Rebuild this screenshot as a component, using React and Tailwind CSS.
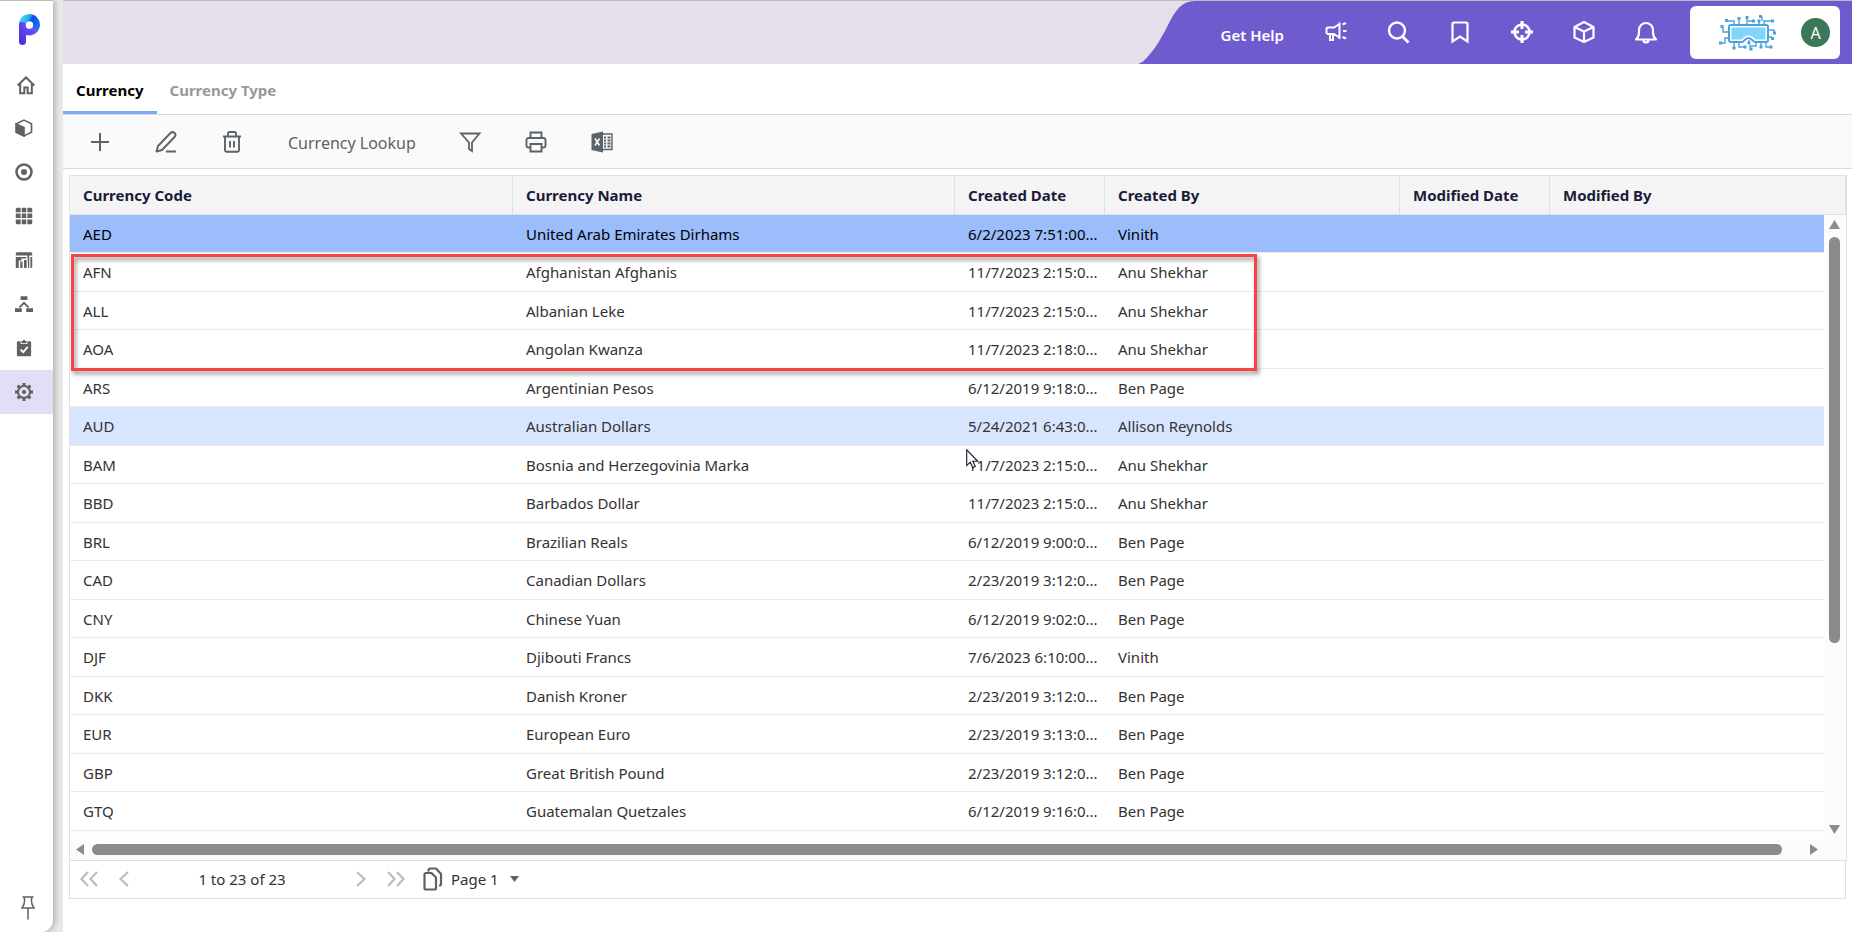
import React from "react";

const ROWS = [
  ["AED", "United Arab Emirates Dirhams", "6/2/2023 7:51:00...", "Vinith"],
  ["AFN", "Afghanistan Afghanis", "11/7/2023 2:15:0...", "Anu Shekhar"],
  ["ALL", "Albanian Leke", "11/7/2023 2:15:0...", "Anu Shekhar"],
  ["AOA", "Angolan Kwanza", "11/7/2023 2:18:0...", "Anu Shekhar"],
  ["ARS", "Argentinian Pesos", "6/12/2019 9:18:0...", "Ben Page"],
  ["AUD", "Australian Dollars", "5/24/2021 6:43:0...", "Allison Reynolds"],
  ["BAM", "Bosnia and Herzegovinia Marka", "11/7/2023 2:15:0...", "Anu Shekhar"],
  ["BBD", "Barbados Dollar", "11/7/2023 2:15:0...", "Anu Shekhar"],
  ["BRL", "Brazilian Reals", "6/12/2019 9:00:0...", "Ben Page"],
  ["CAD", "Canadian Dollars", "2/23/2019 3:12:0...", "Ben Page"],
  ["CNY", "Chinese Yuan", "6/12/2019 9:02:0...", "Ben Page"],
  ["DJF", "Djibouti Francs", "7/6/2023 6:10:00...", "Vinith"],
  ["DKK", "Danish Kroner", "2/23/2019 3:12:0...", "Ben Page"],
  ["EUR", "European Euro", "2/23/2019 3:13:0...", "Ben Page"],
  ["GBP", "Great British Pound", "2/23/2019 3:12:0...", "Ben Page"],
  ["GTQ", "Guatemalan Quetzales", "6/12/2019 9:16:0...", "Ben Page"],
];

const COLUMNS = [
  ["Currency Code", "w-[443px]"],
  ["Currency Name", "w-[442px]"],
  ["Created Date", "w-[150px]"],
  ["Created By", "w-[295px]"],
  ["Modified Date", "w-[150px]"],
  ["Modified By", ""],
];

function Icon({ size = 24, w = 2, children, ...rest }) {
  return (
    <svg
      width={size}
      height={size}
      viewBox="0 0 24 24"
      fill="none"
      stroke="currentColor"
      strokeWidth={w}
      aria-hidden="true"
      className="shrink-0"
      {...rest}
    >
      {children}
    </svg>
  );
}

/* ---------- Sidebar ---------- */

function Logo() {
  return (
    <svg width="21" height="31" viewBox="0 0 21 31" aria-hidden="true">
      <defs>
        <linearGradient id="ring" x1="0" y1="0" x2="1" y2="0.5">
          <stop offset="0" stopColor="#5fe3fb" />
          <stop offset="0.45" stopColor="#1fb4f5" />
          <stop offset="0.6" stopColor="#0a4fe0" />
          <stop offset="1" stopColor="#1273ff" />
        </linearGradient>
        <linearGradient id="stem" x1="0" y1="1" x2="1" y2="0">
          <stop offset="0" stopColor="#4a2bd0" />
          <stop offset="1" stopColor="#7a5cff" />
        </linearGradient>
      </defs>
      <path d="M10.500 0A10.500 10.800 0 0 1 21 10.800C21 13 20 16 17.500 18.500L11 15 4 11 0 9.500C0.500 4 5 0 10.500 0Z" fill="url(#ring)" />
      <path d="M0 9.500C0 7.500 6.500 7 6.500 10.500C7 14 9 15 11 15C12.500 15 14 14 14.500 12.500L18.500 17.500C15.500 21 11 22.200 7 21V27.500A3.500 3.500 0 0 1 0 27.500Z" fill="url(#stem)" />
      <circle cx="10.500" cy="11" r="3.700" fill="#fff" />
    </svg>
  );
}

const NAV = [
  ["Home", <Icon size={20} key="i" w={2.4}><path d="M2 12.500 12 3l10 9.500M5 10.500V22h5v-7h4v7h5V10.500" /></Icon>],
  ["Products", <Icon size={18} key="i" w={2.2}><path d="M12 1.500 22 6.500v11L12 22.500 2 17.500v-11z" /><path d="M1.500 6.500 12 11.500v11L1.500 17.500z" fill="currentColor" /></Icon>],
  ["Targets", <Icon size={18} key="i" w={3.4}><circle cx="12" cy="12" r="10" /><circle cx="12" cy="12" r="4" fill="currentColor" stroke="none" /></Icon>],
  ["Modules", <Icon size={18} key="i" stroke="none" fill="currentColor">
    <path d="M3 1h4.500v6H1V3a2 2 0 0 1 2-2zM9 1h6v6H9zM16.500 1H21a2 2 0 0 1 2 2v4h-6.500zM1 8.500h6.500v6H1zM9 8.500h6v6H9zM16.500 8.500H23v6h-6.500zM1 16.500h6.500V23H3a2 2 0 0 1-2-2zM9 16.500h6V23H9zM16.500 16.500H23V21a2 2 0 0 1-2 2h-4.500z" />
  </Icon>],
  ["Reports", <Icon size={18} key="i" stroke="none" fill="currentColor">
    <path d="M3 1.500h18a2 2 0 0 1 2 2V6H1V3.500a2 2 0 0 1 2-2zM1 8h14v2H8.500v2.500H5V22.500H1zM7 14h3v8.500H7zM12 12h3.500v10.500H12zM16.500 6H19v16.500h-1.500zM20.500 8H23v12.500a2 2 0 0 1-2 2h-.5z" />
  </Icon>],
  ["Hierarchy", <Icon size={18} key="i" w={2.4}>
    <path d="M6 16.500 12 10.500l6 6" />
    <path d="M7.500 1.500h9v5h-9zM0 17.500h9v5H0zM15 17.500h9v5h-9z" fill="currentColor" stroke="none" />
  </Icon>],
  ["Tasks", <Icon size={18} key="i" stroke="none" fill="currentColor">
    <path d="M4 3h3.500v3.500h9V3H20a1.500 1.500 0 0 1 1.500 1.500v17A1.500 1.500 0 0 1 20 23H4a1.500 1.500 0 0 1-1.500-1.500v-17A1.500 1.500 0 0 1 4 3z" />
    <path d="M8.500 2.500h2a1.500 1.500 0 0 1 3 0h2v3h-7z" />
    <path d="m7.500 14 3.500 3.500 6-7" fill="none" stroke="#fff" strokeWidth="2.400" />
  </Icon>],
  ["Settings", <Icon size={18} key="i" w={2.6}>
    <circle cx="12" cy="12" r="8" />
    <circle cx="12" cy="12" r="2.800" fill="currentColor" stroke="none" />
    <path d="M12 0v4M12 20v4M0 12h4M20 12h4M3.500 3.500l3 3M17.500 17.500l3 3M3.500 20.500l3-3M17.500 6.500l3-3" strokeWidth="3.800" />
  </Icon>],
];

function Sidebar() {
  return (
    <aside className="z-10 flex w-[53px] shrink-0 flex-col rounded-br-xl border-t border-[#bdbdbd] bg-white shadow-[2px_0_6px_rgba(0,0,0,0.25)]">
      <a href="#home" aria-label="Dashboard" className="flex h-[61px] items-start pt-[13px] pl-[19px]">
        <Logo />
      </a>
      <nav className="flex flex-1 flex-col text-[#616161]">
        {NAV.map(([label, icon]) => (
          <a
            key={label}
            href={"#" + label.toLowerCase()}
            aria-label={label}
            className={
              "flex h-11 items-center " +
              (label === "Home" ? "pt-0.5 pl-4 " : "pl-[15px] ") +
              (label === "Settings" ? "bg-[#e0dff5]" : "")
            }
          >
            {icon}
          </a>
        ))}
      </nav>
      <button type="button" aria-label="Pin menu" className="mb-3 flex justify-center pl-0.5 text-[#616161]">
        <svg width="14" height="24" viewBox="0 0 14 24" fill="none" stroke="currentColor" strokeWidth="1.500" aria-hidden="true">
          <path d="M1.500 1h11M3 1c1.200 4 1 7-2 11h12c-3-4-3.200-7-2-11M7 12v11.500" />
        </svg>
      </button>
    </aside>
  );
}

/* ---------- Header ---------- */

const ACTIONS = [
  ["Announcements", <Icon size={24} key="i" w={2}>
    <path d="M15.500 2.500v16.500M15.500 4 10 7.500H4A1.500 1.500 0 0 0 2.500 9v3.500A1.500 1.500 0 0 0 4 14h6l5.500 3.500M6 14v6h3v-6" />
    <path d="M18.500 4.500l3.500-1.500M19 11h3.500M18.500 17l3.500 1.500" />
  </Icon>],
  ["Search", <Icon size={24} key="i" w={2.4}><circle cx="11" cy="10.500" r="8" /><path d="m16.500 16.500 6 6" strokeWidth="2.800" /></Icon>],
  ["Bookmarks", <Icon size={24} key="i" w={2.2}><path d="M4.500 21.500V4A1.500 1.500 0 0 1 6 2.500h12A1.500 1.500 0 0 1 19.500 4v17.500L12 16.500z" /></Icon>],
  ["Locate", <Icon size={24} key="i" w={2.6}>
    <circle cx="12" cy="12" r="7.500" />
    <path d="M12 1v8M12 15v8M1 12h8M15 12h8" strokeWidth="3" />
  </Icon>],
  ["Packages", <Icon size={24} key="i" w={2.2} strokeLinejoin="round"><path d="M12 2 21.500 7v10.500L12 22 2.500 17.500V7zM2.500 7 12 11.500 21.500 7M12 11.500V22" /></Icon>],
  ["Notifications", <Icon size={24} key="i" w={2.2} strokeLinejoin="round">
    <path d="M2 19.500h20c-2-2-3-3.500-3-7V10a7 7 0 0 0-14 0v2.500c0 3.500-1 5-3 7zM9.500 20a2.500 2.500 0 0 0 5 0" />
  </Icon>],
];

function VrLogo() {
  return (
    <svg width="58" height="36" viewBox="0 0 58 36" fill="none" stroke="#4aa3df" strokeWidth="1.400" aria-hidden="true">
      <path d="M13 10h35a2 2 0 0 1 2 2v13a2 2 0 0 1-2 2H37c-2 0-3-4-6.500-4S26 27 24 27H13a2 2 0 0 1-2-2V12a2 2 0 0 1 2-2z" fill="#fff" strokeWidth="2" />
      <path d="M13.500 12.500h34v12H38c-1.500 0-3-4-7.500-4s-6 4-7.500 4h-9.500z" fill="#82d4fa" stroke="none" />
      <path d="M16 10V6H9M21 10V4M29 10V2M34 6h-4M41 10V6M46 10V6h8M44 6V2h-3M11 17H5v-5M11 23H7v5H3M50 15h6v3M50 22h4M16 27v6M21 27v5h5M31 25v4M38 27v4h-6v3M43 27v4M48 27v5h4" />
      <path d="M7 4h3v3H7zM19.500 2h3v3h-3zM27.500 1h3v3h-3zM34 4.500h3v3h-3zM39.500 4.500h3v3h-3zM41 0h3v3h-3zM53 4.500h3v3h-3zM2.500 10h3v3h-3zM1 26.500h3v3H1zM55 16.500h3v3h-3zM53 22h3v3h-3zM14.500 31.500h3v3h-3zM25.500 30.500h3v3h-3zM29.500 26.500h3v3h-3zM31.500 32.500h3v3h-3zM41.500 30.500h3v3h-3zM51.500 30.500h3v3h-3z" fill="#4aa3df" stroke="none" />
    </svg>
  );
}

function Header() {
  return (
    <header className="flex h-16 shrink-0 justify-end border-t border-[#bdbdbd] bg-[#e5dfeb]">
      <svg width="57" height="63" viewBox="0 0 57 63" className="shrink-0" aria-hidden="true">
        <path d="M57 0C44 0 38 8 30 24 24 36 18 46 12 53 7 59 4 62 0 63H57Z" fill="#6f5bcd" />
      </svg>
      <div className="flex items-center bg-[#6f5bcd] pr-3 pl-[26px] text-white">
        <a href="#help" className="pt-1 text-[15px] leading-6 font-semibold">Get Help</a>
        <div className="ml-10 flex gap-[38px] pb-0.5">
          {ACTIONS.map(([label, icon]) => (
            <button key={label} type="button" aria-label={label}>{icon}</button>
          ))}
        </div>
        <div className="ml-8 flex h-[53px] w-[150px] items-center rounded-md bg-white pr-2.5 pl-7">
          <VrLogo />
          <button type="button" aria-label="Account" className="ml-auto flex size-[29px] items-center justify-center rounded-full bg-[#3a7859] text-base text-white">
            A
          </button>
        </div>
      </div>
    </header>
  );
}

/* ---------- Toolbar ---------- */

function ToolButton({ label, children }) {
  return (
    <button type="button" aria-label={label} className="flex size-6 items-center justify-center">
      {children}
    </button>
  );
}

function Toolbar() {
  return (
    <div role="toolbar" className="flex h-[54px] shrink-0 items-center gap-[42px] border-b border-[#dadada] bg-[#fafafa] pl-[25px] text-[#5b6268]">
      <ToolButton label="Add"><Icon w={2}><path d="M12 3v18M3 12h18" /></Icon></ToolButton>
      <ToolButton label="Edit">
        <Icon w={1.9} strokeLinejoin="round"><path d="M2.500 21.500 4 16 16.500 3a2.800 2.800 0 0 1 4 4L8 20zM12 21.500h10" /></Icon>
      </ToolButton>
      <ToolButton label="Delete">
        <Icon w={1.9} strokeLinejoin="round"><path d="M3 6.500h18M8 6V3.500A1.500 1.500 0 0 1 9.500 2h5A1.500 1.500 0 0 1 16 3.500V6M5 6.500V20a1.800 1.800 0 0 0 1.800 1.800h10.400A1.800 1.800 0 0 0 19 20V6.500M10 11v6.500M14 11v6.500" /></Icon>
      </ToolButton>
      <button type="button" className="ml-0.5 pt-0.5 text-base leading-6">Currency Lookup</button>
      <ToolButton label="Filter">
        <Icon w={1.8}><path d="M3 3.500h18.500L14 12.500V21l-3-2v-6.500z" /></Icon>
      </ToolButton>
      <ToolButton label="Print">
        <Icon w={1.9}><path d="M6.500 8V2.500h11V8M6.500 17.500H4A1.500 1.500 0 0 1 2.500 16v-6A2 2 0 0 1 4.500 8h15a2 2 0 0 1 2 2v6a1.500 1.500 0 0 1-1.500 1.500h-2.500M6.500 14h11v7.500h-11z" /></Icon>
      </ToolButton>
      <ToolButton label="Export to Excel">
        <Icon stroke="none" fill="currentColor">
          <path d="M1.500 4 13 1.500v21L1.500 20z" />
          <path d="M13 4h9v15.500h-9" fill="none" stroke="currentColor" strokeWidth="1.400" />
          <path d="M14 6.500h2v2h-2zM17.500 6.500h3v2h-3zM14 9.500h2v2h-2zM17.500 9.500h3v2h-3zM14 12.500h2v2h-2zM17.500 12.500h3v2h-3zM14 15.500h2v2h-2zM17.500 15.500h3v2h-3z" />
          <path d="m5 8.500 4.500 7M9.500 8.500 5 15.500" stroke="#fafafa" strokeWidth="1.600" />
        </Icon>
      </ToolButton>
    </div>
  );
}

/* ---------- Grid ---------- */

function Triangle({ d, w, h }) {
  return (
    <svg width={w} height={h} viewBox={`0 0 ${w} ${h}`} fill="#8b8b8b" className="shrink-0" aria-hidden="true">
      <path d={d} />
    </svg>
  );
}

function Grid() {
  return (
    <div className="flex min-h-0 flex-1 flex-col border border-[#e0e0e0]">
      <div className="relative min-h-0 flex-1 overflow-hidden">
        <table className="w-full table-fixed border-separate border-spacing-0 text-left text-[15px] leading-5 text-[#333]">
          <thead>
            <tr className="h-[39px] bg-[#f4f4f4] text-[#1b1b3a]">
              {COLUMNS.map(([name, width]) => (
                <th key={name} scope="col" className={"border-r border-b border-[#e0e0e0] py-0 pr-2 pl-[13px] font-bold " + width}>
                  {name}
                </th>
              ))}
            </tr>
          </thead>
          <tbody>
            {ROWS.map((row) => (
              <tr
                key={row[0]}
                className={
                  "h-[38px] even:h-[39px] " +
                  (row[0] === "AED" ? "bg-[#9bbdfb] text-black" : row[0] === "AUD" ? "bg-[#d8e5fe]" : "")
                }
              >
                {[...row, "", ""].map((cell, i) => (
                  <td key={i} className="border-b border-[#ebebeb] py-0 pl-[13px] whitespace-nowrap">
                    {cell}
                  </td>
                ))}
              </tr>
            ))}
          </tbody>
        </table>

        <div className="absolute top-[39px] right-0 bottom-0 flex w-[22px] flex-col items-center bg-[#fcfcfc] pt-[5px] pr-px pb-[5px]">
          <Triangle w={11} h={9} d="M5.500 0 11 9H0z" />
          <div className="my-2 flex min-h-0 flex-1">
            <div className="h-[70%] w-[11px] rounded-full bg-[#8b8b8b]" />
          </div>
          <Triangle w={11} h={9} d="M0 0H11L5.500 9z" />
        </div>

        <div className="absolute top-[78px] left-px h-[117px] w-[1186px] border-[3px] border-[#fb4141] drop-shadow-[2px_3px_2px_rgba(0,0,0,0.45)]" />

        <svg width="14" height="20" viewBox="0 0 14 20" className="absolute top-[273px] left-[896px]" aria-hidden="true">
          <path d="M0.700 0.800V16.500L4.300 13.200 6.800 18.600 9.300 17.400 6.900 12.300H11.800Z" fill="#fff" stroke="#1a1a2a" strokeWidth="1.100" />
        </svg>
      </div>
      <div className="flex h-[21px] shrink-0 items-center bg-[#fcfcfc] pr-7 pl-1.5">
        <Triangle w={8} h={11} d="M8 0V11L0 5.500z" />
        <div className="mr-7 ml-2 h-[11px] flex-1 rounded-full bg-[#8b8b8b]" />
        <Triangle w={8} h={11} d="M0 0V11L8 5.500z" />
      </div>
    </div>
  );
}

function Chevrons({ label, d, w }) {
  return (
    <button type="button" aria-label={label} className="text-[#bdbdbd]">
      <svg width={w} height="18" viewBox={`0 0 ${w} 18`} fill="none" stroke="currentColor" strokeWidth="2.200" aria-hidden="true">
        <path d={d} />
      </svg>
    </button>
  );
}

function Pager() {
  return (
    <div className="mr-px flex h-[38px] shrink-0 items-center border-x border-b border-[#e0e0e0] pb-0.5 pl-2.5 text-[15px] leading-5 text-[#333]">
      <Chevrons label="First page" w={18} d="M8 2 1.500 9 8 16M17 2 10.500 9 17 16" />
      <div className="ml-[21px] flex"><Chevrons label="Previous page" w={10} d="M9 2 1.500 9 9 16" /></div>
      <span className="w-[226px] text-center">1 to 23 of 23</span>
      <Chevrons label="Next page" w={12} d="M2 2 9.500 9 2 16" />
      <div className="ml-5 flex"><Chevrons label="Last page" w={18} d="M1 2 7.500 9 1 16M10 2 16.500 9 10 16" /></div>
      <label htmlFor="page" className="ml-[18px] flex items-center text-[#5b6268]">
        <svg width="20" height="24" viewBox="0 0 20 24" fill="none" stroke="currentColor" strokeWidth="2.200" strokeLinejoin="round" aria-label="Page">
          <path d="M1.500 7.500A1.500 1.500 0 0 1 3 6h5.500l4.500 4.500V21a1.500 1.500 0 0 1-1.500 1.500H3A1.500 1.500 0 0 1 1.500 21z" />
          <path d="M5.500 4.500V3.500A2 2 0 0 1 7.500 1.500H13l5 5.500v10a1.500 1.500 0 0 1-1.500 1.500H16" />
        </svg>
      </label>
      <select id="page" defaultValue="1" className="ml-2 w-[59px] appearance-none bg-transparent text-[#333]">
        <option value="1">Page 1</option>
      </select>
      <svg width="9" height="6" viewBox="0 0 9 6" fill="#5b6268" aria-hidden="true">
        <path d="M0 0H9L4.500 6z" />
      </svg>
    </div>
  );
}

export default function App() {
  return (
    <div className="flex h-screen bg-[#e9e9e9] font-['Noto_Sans','Open_Sans',sans-serif]">
      <Sidebar />
      <main className="ml-2.5 flex min-w-0 flex-1 flex-col bg-white">
        <Header />
        <div role="tablist" className="flex h-[51px] shrink-0 border-b border-[#dadada] text-[15px] leading-5 font-bold">
          <button type="button" role="tab" aria-selected="true" className="border-b-[3px] border-[#7caafb] px-[13px] pt-1 text-black">
            Currency
          </button>
          <button type="button" role="tab" aria-selected="false" className="border-b-[3px] border-transparent px-[13px] pt-1 text-[#999]">
            Currency Type
          </button>
        </div>
        <Toolbar />
        <section className="flex min-h-0 flex-1 flex-col pt-1.5 pr-[5px] pb-[33px] pl-1.5">
          <Grid />
          <Pager />
        </section>
      </main>
    </div>
  );
}
